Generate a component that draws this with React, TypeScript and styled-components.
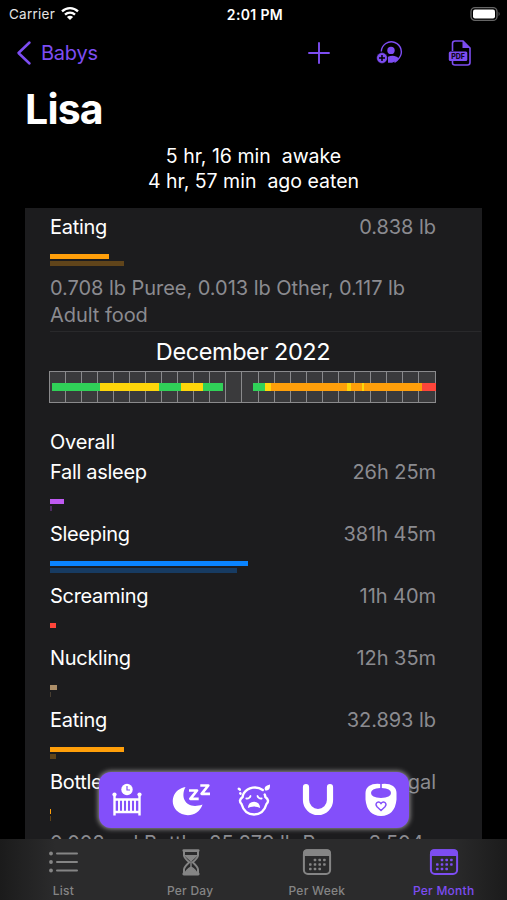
import React from 'react';
import styled, { createGlobalStyle } from 'styled-components';

const PURPLE = '#7d4df2';

const GlobalStyle = createGlobalStyle`
  * { box-sizing: border-box; }
  body { margin: 0; background: #000; font-family: Inter, "Liberation Sans", sans-serif; color: #fff; }
`;

const Screen = styled.div`
  position: relative;
  width: 507px;
  height: 900px;
  overflow: hidden;
  background: #000;
  display: flex;
  flex-direction: column;
`;

const StatusBar = styled.header`
  flex: none;
  height: 28px;
  display: grid;
  grid-template-columns: 1fr auto 1fr;
  align-items: center;
  padding: 0 6px 0 9px;
  font-size: 13.5px;
`;

const Carrier = styled.div`
  display: flex;
  align-items: center;
  gap: 6px;
  color: #e4e4e4;
  letter-spacing: 0.25px;
`;

const Clock = styled.div`
  font-weight: 600;
  font-size: 14px;
  letter-spacing: 0.35px;
`;

const StatusRight = styled.div`
  display: flex;
  justify-content: flex-end;
  padding-bottom: 1px;
`;

const NavBar = styled.nav`
  flex: none;
  height: 49px;
  display: flex;
  align-items: center;
  justify-content: space-between;
  padding: 0 35px 0 17px;
  color: ${PURPLE};
`;

const Back = styled.div`
  display: flex;
  align-items: center;
  gap: 9px;
  font-size: 20px;
  letter-spacing: -0.25px;
`;

const Actions = styled.div`
  display: flex;
  align-items: center;
  gap: 46px;
`;

const Title = styled.h1`
  flex: none;
  margin: 0;
  height: 66px;
  padding-left: 25px;
  line-height: 64px;
  font-size: 41px;
  font-weight: 700;
  letter-spacing: -0.8px;
`;

const Summary = styled.div`
  flex: none;
  height: 65px;
  padding-top: 1px;
  text-align: center;
  white-space: pre;
  font-size: 19.5px;
  line-height: 25px;
  letter-spacing: 0;
`;

const Panel = styled.main`
  flex: none;
  width: 457px;
  height: 631px;
  margin-left: 25px;
  padding: 5px 46px 0 25px;
  background: #1c1c1e;
  overflow: hidden;
`;

const Entry = styled.section`
  height: 62px;
`;

const EntryHead = styled.div`
  display: flex;
  justify-content: space-between;
  height: 28px;
  line-height: 28px;
  font-size: 20px;
  letter-spacing: -0.3px;
  margin-bottom: 12.5px;
`;

const Amount = styled.span`
  color: #8b8b90;
  letter-spacing: -0.05px;
`;

const Bar = styled.div<{ $w: number; $color: string }>`
  width: ${p => p.$w}px;
  height: 5px;
  margin-bottom: 2.5px;
  background: ${p => p.$color};
`;

const Details = styled.p`
  margin: 0 -20px 0 0;
  font-size: 20px;
  line-height: 27px;
  letter-spacing: -0.04px;
  color: #8b8b90;
`;

const Divider = styled.hr`
  height: 1px;
  border: 0;
  margin: 2px -45px 0 0;
  background: #29292b;
`;

const Month = styled.h2`
  margin: 0;
  height: 39px;
  line-height: 39px;
  text-align: center;
  font-size: 23.5px;
  font-weight: 400;
  letter-spacing: -0.42px;
`;

const Timeline = styled.div`
  display: grid;
  width: 387px;
  height: 32px;
  margin-left: -1px;
`;

const Days = styled.div`
  grid-area: 1 / 1;
  display: grid;
  grid-template-columns: repeat(24, 1fr);
  border: 1.5px solid #8a8a8c;
  background: #3a3a3c;
`;

const Day = styled.div`
  border-right: 1.5px solid #8a8a8c;
  &:last-child { border-right: 0; }
`;

const Segments = styled.div`
  grid-area: 1 / 1;
  display: flex;
  align-self: center;
  height: 8px;
  padding-left: 3px;
  z-index: 1;
`;

const Segment = styled.div<{ $w: number; $color: string }>`
  flex: none;
  width: ${p => p.$w}px;
  background: ${p => p.$color};
`;

const Overall = styled.h3`
  margin: 25px 0 2px;
  height: 28px;
  line-height: 28px;
  font-size: 20px;
  font-weight: 400;
  letter-spacing: -0.2px;
`;

const QuickActions = styled.div`
  position: absolute;
  left: 99px;
  top: 772px;
  width: 310px;
  height: 56px;
  border-radius: 12px;
  background: #834ffa;
  box-shadow: 0 0 5px 1px rgba(180, 176, 176, 0.8);
  display: grid;
  grid-template-columns: repeat(5, 63.5px);
  justify-content: center;
  align-items: center;
  justify-items: center;
`;

const TabBar = styled.footer`
  flex: none;
  height: 61px;
  display: grid;
  grid-template-columns: repeat(4, 1fr);
  background: linear-gradient(90deg, #1b1b1b 0, #2b2b2c 55px, #2b2b2c 450px, #1b1b1b 100%);
`;

const Tab = styled.div<{ $active?: boolean }>`
  display: flex;
  flex-direction: column;
  align-items: center;
  padding-top: 8px;
  color: ${p => (p.$active ? PURPLE : '#858585')};
  font-size: 12px;
  font-weight: 500;
  line-height: 15px;
  letter-spacing: 0.25px;
  gap: 5px;
`;

const Icon = styled.svg`
  display: block;
  overflow: visible;
  flex: none;
`;

const PdfLabel = styled.text`
  font: 800 7px Inter, sans-serif;
`;

const Wifi = () => (
  <Icon width="18" height="14" viewBox="0 0 18 14" fill="none" stroke="#fff" strokeWidth="2.3">
    <path d="M1 4.400C5.600-.1 12.400-.1 17 4.400" />
    <path d="M4 7.700C6.900 4.900 11.100 4.900 14 7.700" />
    <path d="M9 13.100 5.900 10Q9 7.600 12.100 10Z" fill="#fff" stroke="none" />
  </Icon>
);

const Battery = () => (
  <Icon width="31" height="14" viewBox="0 0 31 14">
    <rect x="1" y="0.600" width="26" height="12.800" rx="4" fill="none" stroke="#666" strokeWidth="1.300" />
    <rect x="3" y="2.600" width="22" height="8.800" rx="2" fill="#fff" />
    <path d="M28.600 4.800q2 2.200 0 4.400z" fill="#666" />
  </Icon>
);

const ShareIcon = () => (
  <Icon width="26" height="24" viewBox="0 0 26 24" fill="none" stroke={PURPLE}>
    <path d="M5.300 10.500A10 10 0 1 1 23 17.200Q21.200 20 18.500 21.300" strokeWidth="1.400" />
    <circle cx="15" cy="9.400" r="3.700" fill={PURPLE} stroke="none" />
    <path d="M12 21.700v-6q3-1.300 6.500-.8 3.500.6 4.200 2.800-2.300 3.400-6.700 4.100z" fill={PURPLE} stroke="none" />
    <circle cx="6" cy="17" r="5.400" fill={PURPLE} stroke="#000" strokeWidth="0.500" />
    <path d="M3 17h6M6 14v6" stroke="#000" strokeWidth="1.500" />
  </Icon>
);

const PdfIcon = () => (
  <Icon width="24" height="26" viewBox="0 0 24 26">
    <path d="M4.500 11V3.500Q4.500 1 7 1h8l7 7v14.500q0 2.500-2.500 2.500H7q-2.500 0-2.500-2v-2" fill="none" stroke={PURPLE} strokeWidth="1.600" />
    <path d="M14.500 1v7H22z" fill={PURPLE} />
    <rect x="0.800" y="11.500" width="18.500" height="9.500" rx="1.500" fill={PURPLE} />
    <PdfLabel x="10" y="18.800" textAnchor="middle" fill="#100820">PDF</PdfLabel>
  </Icon>
);

const CribIcon = () => (
  <Icon width="30" height="34" viewBox="0 0 30 34" fill="none" stroke="#fff">
    <circle cx="15" cy="6.500" r="5.700" fill="#fff" stroke="none" />
    <path d="M15 3v4h3" stroke="#834ffa" strokeWidth="1.200" />
    <path d="M2.500 12v20.500M27.500 12v20.500" strokeWidth="2.400" />
    <circle cx="2.500" cy="11.500" r="2.100" fill="#fff" stroke="none" />
    <circle cx="27.500" cy="11.500" r="2.100" fill="#fff" stroke="none" />
    <path d="M2.500 16.500h25M2.500 29h25" strokeWidth="2.400" />
    <path d="M7 16v12M11 16v12M15 16v12M19 16v12M23 16v12" strokeWidth="1.900" />
  </Icon>
);

const MoonIcon = () => (
  <Icon width="38" height="34" viewBox="0 0 38 34">
    <path d="M13.500 4.100C1.500 6-3 19 4.500 27.500c8 8 22.500 5.500 26-6C15.500 27 7.300 16 13.500 4.100Z" fill="#fff" />
    <g fill="none" stroke="#fff" strokeWidth="2.700" strokeLinejoin="round">
      <path d="M17 7.500h8l-6.700 8.300h8.400" />
      <path d="M28.300 2.500h8l-6.700 8.300h8.400" />
    </g>
  </Icon>
);

const CryIcon = () => (
  <Icon width="34" height="34" viewBox="0 0 34 34" fill="none" stroke="#fff" strokeWidth="2.400" strokeLinecap="round">
    <path d="M25.800 7A13.500 13.500 0 0 0 6.800 10.300Q5.900 12 5.600 14Q1 17.500 4.500 21Q7.500 31.500 17 31.500T29.500 21Q33 17.500 28.400 14Q28.200 12.500 27.700 11.500" />
    <path d="M1.800 5.800l1 .8M3.300 10.300l.2.300" strokeWidth="2.500" />
    <path d="M33 1.500Q26 3 28 7.300 33.500 8.500 33 1.500Z" fill="#fff" stroke="none" />
    <path d="M9.300 15.500q3.200.4 4.200-2.500M24.700 15.500q-3.200.4-4.200-2.500" strokeWidth="1.800" />
    <path d="M10.800 25q.7-6.300 6.200-6.300T23.200 25q-2.500-1.500-6.200-1.500T10.800 25Z" fill="#fff" stroke="none" />
  </Icon>
);

const PillowIcon = () => (
  <Icon width="32" height="34" viewBox="0 0 32 34">
    <path d="M4 4.200V17a12 12 0 0 0 24 0V4.200" fill="none" stroke="#fff" strokeWidth="6.200" strokeLinecap="round" />
  </Icon>
);

const BibIcon = () => (
  <Icon width="32" height="34" viewBox="0 0 32 34">
    <path fillRule="evenodd" fill="#fff" d="M15.200 1Q8 .3 4 3 .5 5.500.5 10v6.500Q2 32.500 16 33 30 32.500 31.500 16.500V10Q31.500 5.500 28 3 24 .3 16.800 1v4q9.200.3 9.200 5T16 15Q6 14.500 6 10t9.200-5Z" />
    <path d="M16 27.500l-4-3.700q-2-2.600 0-4.300 2.200-1.500 4 1 1.800-2.500 4-1 2 1.700 0 4.300Z" fill="none" stroke="#834ffa" strokeWidth="1.400" />
  </Icon>
);

const ListIcon = () => (
  <Icon width="30" height="31" viewBox="0 0 30 31" stroke="currentColor" fill="currentColor">
    {[6.500, 15, 23.500].map(y => (
      <g key={y}>
        <circle cx="3" cy={y} r="1.900" stroke="none" />
        <path d={`M9 ${y}H29`} strokeWidth="2" strokeLinecap="round" />
      </g>
    ))}
  </Icon>
);

const HourglassIcon = () => (
  <Icon width="20" height="31" viewBox="0 0 20 31" fill="none" stroke="currentColor">
    <path d="M4 4v4.500Q4.200 11 9.300 15.300 4.200 20 4 22.500V27M18 4v4.500Q17.800 11 12.700 15.300 17.800 20 18 22.500V27" strokeWidth="2" />
    <path d="M3.800 3.600h14.400M3.800 27h14.400" strokeWidth="2.800" strokeLinecap="round" />
    <path d="M5.500 8.800h11L11 13.800zM11 14v6M5 26.500q1-3.500 6-6.500 5 3 6 6.500z" fill="currentColor" strokeWidth="1.400" />
  </Icon>
);

const CalendarIcon = () => (
  <Icon width="30" height="31" viewBox="0 0 30 31" fill="currentColor">
    <rect x="1.900" y="3.200" width="26.200" height="23.800" rx="4" fill="none" stroke="currentColor" strokeWidth="2" />
    <path d="M1 9V6.200Q1 2.200 5 2.200H25Q29 2.200 29 6.200V9Z" />
    {[12.200, 16.700, 21.200].map((y, row) =>
      [7, 11.700, 16.400, 21.100].map((x, col) =>
        (row === 0 && col === 0) || (row === 2 && col === 3) ? null : (
          <rect key={`${x}-${y}`} x={x} y={y - 0.500} width="2.600" height="2.600" rx="0.700" />
        ),
      ),
    )}
  </Icon>
);

type EntryData = { name: string; amount: string; color: string; past: string; w: number; pastW: number };

const entries: EntryData[] = [
  { name: 'Fall asleep', amount: '26h 25m', color: '#bf5af2', past: '#4d2b60', w: 14, pastW: 2 },
  { name: 'Sleeping', amount: '381h 45m', color: '#0a84ff', past: '#173b62', w: 198, pastW: 187 },
  { name: 'Screaming', amount: '11h 40m', color: '#ff453a', past: '#1c1c1e', w: 6, pastW: 0 },
  { name: 'Nuckling', amount: '12h 35m', color: '#ac8e68', past: '#463d31', w: 6.5, pastW: 1 },
  { name: 'Eating', amount: '32.893 lb', color: '#ff9f0a', past: '#60441a', w: 74, pastW: 6 },
  { name: 'Bottle', amount: '0.002 gal', color: '#ff9f0a', past: '#60441a', w: 1, pastW: 1 },
];

const GREEN = '#30d158';
const YELLOW = '#ffd60a';
const ORANGE = '#ff9f0a';

const segments: [number, string][] = [
  [48, GREEN], [59, YELLOW], [21.5, GREEN], [22.5, YELLOW], [20, GREEN],
  [30, 'transparent'], [12, GREEN], [6, YELLOW], [76, ORANGE], [4, YELLOW],
  [10.5, ORANGE], [2, YELLOW], [58, ORANGE], [14, '#ff453a'],
];

const ActivityEntry = ({ name, amount, color, past, w, pastW }: EntryData) => (
  <Entry>
    <EntryHead>
      <span>{name}</span>
      <Amount>{amount}</Amount>
    </EntryHead>
    <Bar $w={w} $color={color} />
    <Bar $w={pastW} $color={past} />
  </Entry>
);

export default function App() {
  return (
    <>
      <GlobalStyle />
      <Screen>
        <StatusBar>
          <Carrier>Carrier <Wifi /></Carrier>
          <Clock>2:01 PM</Clock>
          <StatusRight><Battery /></StatusRight>
        </StatusBar>
        <NavBar>
          <Back>
            <Icon width="15" height="24" viewBox="0 0 15 24" fill="none" stroke={PURPLE} strokeWidth="2.500" strokeLinecap="round" strokeLinejoin="round">
              <path d="M12.500 1.500 1.500 12l11 10.500" />
            </Icon>
            Babys
          </Back>
          <Actions>
            <Icon width="22" height="22" viewBox="0 0 22 22" stroke={PURPLE} strokeWidth="1.900" strokeLinecap="round">
              <path d="M1 11h20M11 1v20" />
            </Icon>
            <ShareIcon />
            <PdfIcon />
          </Actions>
        </NavBar>
        <Title>Lisa</Title>
        <Summary>{'5 hr, 16 min  awake\n4 hr, 57 min  ago eaten'}</Summary>
        <Panel>
          <ActivityEntry name="Eating" amount="0.838 lb" color="#ff9f0a" past="#60441a" w={59} pastW={74} />
          <Details>0.708 lb Puree, 0.013 lb Other, 0.117 lb<br />Adult food</Details>
          <Divider />
          <Month>December 2022</Month>
          <Timeline>
            <Days>{Array.from({ length: 24 }, (_, i) => <Day key={i} />)}</Days>
            <Segments>
              {segments.map(([w, color], i) => <Segment key={i} $w={w} $color={color} />)}
            </Segments>
          </Timeline>
          <Overall>Overall</Overall>
          {entries.map(e => <ActivityEntry key={e.name} {...e} />)}
          <Details>0.002 gal Bottle, 25.279 lb Puree, 3.504</Details>
        </Panel>
        <TabBar>
          <Tab><ListIcon />List</Tab>
          <Tab><HourglassIcon />Per Day</Tab>
          <Tab><CalendarIcon />Per Week</Tab>
          <Tab $active><CalendarIcon />Per Month</Tab>
        </TabBar>
        <QuickActions>
          <CribIcon />
          <MoonIcon />
          <CryIcon />
          <PillowIcon />
          <BibIcon />
        </QuickActions>
      </Screen>
    </>
  );
}
